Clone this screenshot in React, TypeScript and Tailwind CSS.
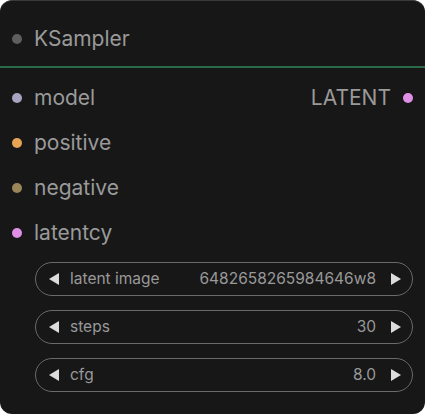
const inputs = [
  { name: 'model', color: 'bg-[#a7a4c2]' },
  { name: 'positive', color: 'bg-[#e7a455]' },
  { name: 'negative', color: 'bg-[#9a8558]' },
  { name: 'latentcy', color: 'bg-[#df90e6]' },
]

const widgets = [
  { label: 'latent image', value: '6482658265984646w8' },
  { label: 'steps', value: '30' },
  { label: 'cfg', value: '8.0' },
]

function Arrow({ dir }: { dir: 'left' | 'right' }) {
  return (
    <svg width="12" height="14" viewBox="0 0 12 14" className="shrink-0">
      {dir === 'left' ? (
        <path d="M11 1 L1 7 L11 13 Z" fill="#dcdcdc" />
      ) : (
        <path d="M1 1 L11 7 L1 13 Z" fill="#dcdcdc" />
      )}
    </svg>
  )
}

export default function App() {
  return (
    <div className="w-[425px] h-[414px] bg-white" style={{ fontFamily: 'Inter, "Noto Sans", sans-serif' }}>
      <div className="w-full h-full bg-[#171717] rounded-[12px] border-t border-[#3a3a3a] flex flex-col">
        <div className="h-[67px] pt-[10px] flex items-center gap-3 pl-3 border-b-2 border-[#2a6a48]">
          <span className="w-[10px] h-[10px] rounded-full bg-[#5e5e5e]" />
          <span className="text-[21px] text-[#9a9a9a]">KSampler</span>
        </div>

        <div className="flex flex-col pt-[7px]">
          {inputs.map((s, i) => (
            <div key={s.name} className="h-[45px] flex items-center pl-3 pr-3 gap-3">
              <span className={`w-[10px] h-[10px] rounded-full ${s.color}`} />
              <span className="text-[21px] text-[#9a9a9a]">{s.name}</span>
              {i === 0 && (
                <div className="ml-auto flex items-center gap-3">
                  <span className="text-[21px] text-[#9a9a9a]">LATENT</span>
                  <span className="w-[10px] h-[10px] rounded-full bg-[#df90e6]" />
                </div>
              )}
            </div>
          ))}
        </div>

        <div className="flex flex-col gap-[14px] pl-[35px] pr-3 mt-[7px]">
          {widgets.map((w) => (
            <div
              key={w.label}
              className="h-[34px] rounded-full border border-[#6a6a6a] flex items-center pl-[12px] pr-[10px] gap-[10px] text-[15.5px] text-[#999]"
            >
              <Arrow dir="left" />
              <span>{w.label}</span>
              <span className="ml-auto mr-[4px]">{w.value}</span>
              <Arrow dir="right" />
            </div>
          ))}
        </div>
      </div>
    </div>
  )
}
